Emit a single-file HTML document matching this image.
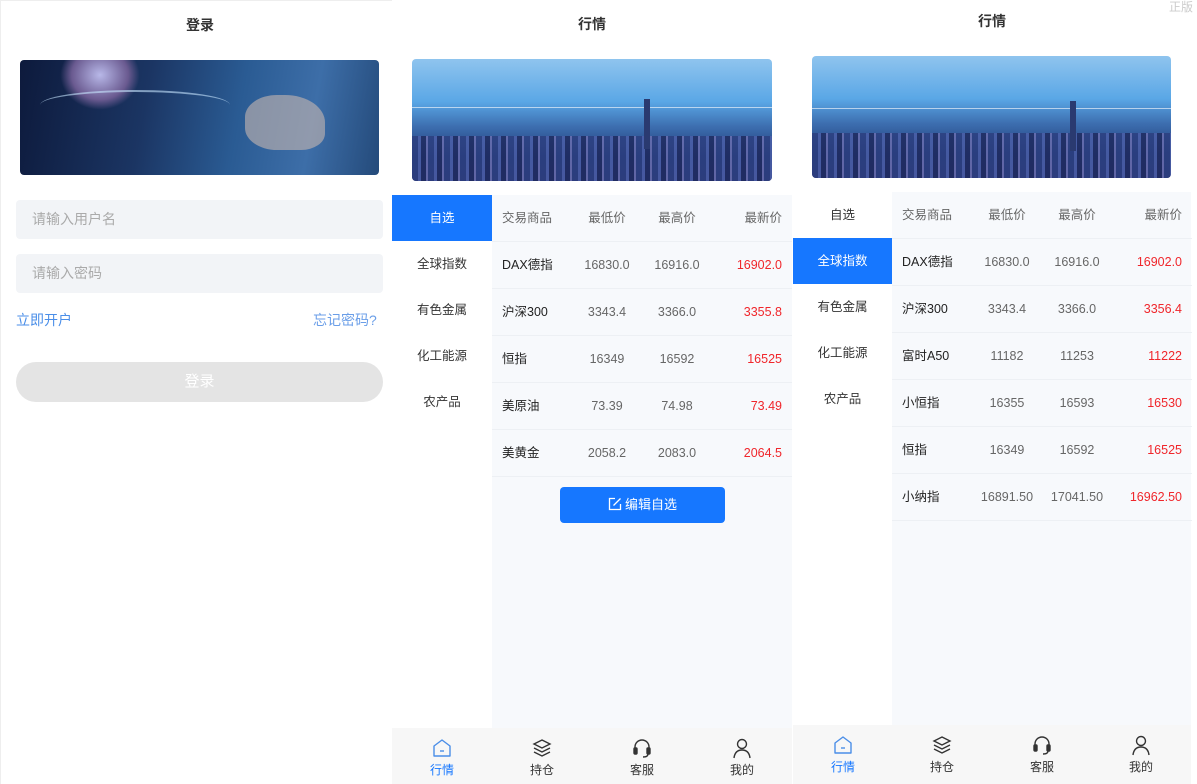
<!DOCTYPE html>
<html><head><meta charset="utf-8"><style>
*{margin:0;padding:0;box-sizing:border-box}
body{width:1197px;height:784px;position:relative;background:#fff;font-family:"Liberation Sans","Noto Sans CJK SC",sans-serif;overflow:hidden;color:#333}
.a{position:absolute}
.title{font-size:14px;font-weight:bold;color:#333;text-align:center}
.ban2{background:linear-gradient(180deg,#8fc4ee 0%,#5aa7e6 35%,#3d6fb0 55%,#1f3a78 80%,#2a2f6a 100%);border-radius:4px;overflow:hidden}
.ban1{background:linear-gradient(100deg,#0d1a3c 0%,#1b3563 35%,#2a5b93 60%,#3d6ea8 80%,#244a7a 100%);border-radius:4px;overflow:hidden}
.menu div{height:46px;line-height:46px;text-align:center;font-size:12.5px;color:#333}
.menu .on{background:#1677ff;color:#fff}
.tbl{background:#f7f9fc}
.row{position:absolute;left:0;width:300px;height:47px;border-bottom:1px solid #edf0f4;font-size:12.5px}
.row span{position:absolute;top:0;line-height:46px}
.c1{left:10px;color:#222}.c2{left:85px;width:60px;text-align:center;color:#666}.c3{left:155px;width:60px;text-align:center;color:#666}.c4{right:10px;color:#f0262b}
.hd span{color:#666}.hd .c4{color:#666}
.nav{background:#f7f7f7}
.nav div{position:absolute;top:0;width:100px;text-align:center;font-size:12px;color:#333;line-height:16px}
.nav svg{display:block;margin:9px auto 3px}
.city{position:absolute;left:0;bottom:0;width:100%;height:45px;background:repeating-linear-gradient(90deg,#2c3f80 0 6px,#4b5fa8 6px 9px,#1f2b60 9px 14px,#6a6fb0 14px 16px);opacity:.85}
</style></head><body>
<div class="a" style="right:4px;top:-2px;font-size:12px;color:#ccc">正版</div>
<div class="a" style="left:0;top:0;width:1px;height:784px;background:#eee"></div>
<div class="a" style="left:0;top:0;width:392px;height:1px;background:#eee"></div>
<!-- panel1 -->
<div class="a title" style="left:0;top:15px;width:400px">登录</div>
<div class="a ban1" style="left:20px;top:60px;width:359px;height:115px">
<div class="a" style="left:40px;top:-20px;width:80px;height:70px;border-radius:50%;background:radial-gradient(#b8b8e8,#6a5a90 50%,transparent 70%)"></div>
<div class="a" style="left:225px;top:35px;width:80px;height:55px;border-radius:40% 50% 30% 40%;background:#c8b8b0;opacity:.6"></div>
<div class="a" style="left:20px;top:30px;width:190px;height:30px;border-top:2px solid rgba(200,230,255,.6);border-radius:50%"></div>
</div>
<div class="a" style="left:16px;top:200px;width:367px;height:39px;background:#f2f4f7;border-radius:4px;font-size:14px;color:#aaa;line-height:39px;padding-left:16px">请输入用户名</div>
<div class="a" style="left:16px;top:254px;width:367px;height:39px;background:#f2f4f7;border-radius:4px;font-size:14px;color:#aaa;line-height:39px;padding-left:16px">请输入密码</div>
<div class="a" style="left:16px;top:310px;font-size:14px;color:#4a8ee8">立即开户</div>
<div class="a" style="left:313px;top:310px;font-size:14px;color:#6a9ee8">忘记密码?</div>
<div class="a" style="left:16px;top:362px;width:367px;height:40px;background:#e4e4e4;border-radius:20px;color:#fff;font-size:15px;text-align:center;line-height:40px">登录</div>

<!-- panel2 -->
<div class="a title" style="left:392px;top:14px;width:400px">行情</div>
<div class="a ban2" style="left:412px;top:59px;width:360px;height:122px">
<div class="city"></div>
<div class="a" style="left:0;top:48px;width:360px;height:1px;background:rgba(255,255,255,.6)"></div>
<div class="a" style="left:232px;top:40px;width:6px;height:50px;background:#2a3a70"></div>
</div>
<div class="a menu" style="left:392px;top:195px;width:100px">
<div class="on">自选</div><div>全球指数</div><div>有色金属</div><div>化工能源</div><div>农产品</div></div>
<div class="a tbl" style="left:492px;top:195px;width:300px;height:533px">
<div class="row hd" style="top:0"><span class="c1" style="color:#666">交易商品</span><span class="c2">最低价</span><span class="c3">最高价</span><span class="c4">最新价</span></div>
<div class="row" style="top:47px"><span class="c1">DAX德指</span><span class="c2">16830.0</span><span class="c3">16916.0</span><span class="c4">16902.0</span></div>
<div class="row" style="top:94px"><span class="c1">沪深300</span><span class="c2">3343.4</span><span class="c3">3366.0</span><span class="c4">3355.8</span></div>
<div class="row" style="top:141px"><span class="c1">恒指</span><span class="c2">16349</span><span class="c3">16592</span><span class="c4">16525</span></div>
<div class="row" style="top:188px"><span class="c1">美原油</span><span class="c2">73.39</span><span class="c3">74.98</span><span class="c4">73.49</span></div>
<div class="row" style="top:235px"><span class="c1">美黄金</span><span class="c2">2058.2</span><span class="c3">2083.0</span><span class="c4">2064.5</span></div>
<div class="a" style="left:68px;top:292px;width:165px;height:36px;background:#1677ff;border-radius:4px;color:#fff;font-size:13px;text-align:center;line-height:36px">
<svg width="14" height="14" viewBox="0 0 14 14" style="vertical-align:-2px;margin-right:3px"><path d="M7 1.5H1.5v11h11V7M5.5 8.5l7-7" fill="none" stroke="#fff" stroke-width="1.3"/></svg>编辑自选</div>
</div>
<div class="a nav" style="left:392px;top:728px;width:400px;height:56px">
<div style="left:0;color:#1677ff"><svg width="22" height="22" viewBox="0 0 22 22"><path d="M3 9L11 3l8 6v10H3z" fill="none" stroke="#4a8ee8" stroke-width="1.4" stroke-linejoin="round"/><path d="M9 14h4" stroke="#4a8ee8" stroke-width="1.4"/></svg>行情</div>
<div style="left:100px"><svg width="22" height="22" viewBox="0 0 22 22" fill="none" stroke="#333" stroke-width="1.4"><path d="M11 3l8 4-8 4-8-4z"/><path d="M3 11l8 4 8-4M3 15l8 4 8-4"/></svg>持仓</div>
<div style="left:200px"><svg width="22" height="22" viewBox="0 0 22 22" fill="none" stroke="#333" stroke-width="1.4"><path d="M4 12V10a7 7 0 0114 0v2"/><rect x="3" y="11" width="3" height="6" rx="1" fill="#333"/><rect x="16" y="11" width="3" height="6" rx="1" fill="#333"/><path d="M17 17q0 3-5 3"/></svg>客服</div>
<div style="left:300px"><svg width="22" height="22" viewBox="0 0 22 22" fill="none" stroke="#333" stroke-width="1.4"><circle cx="11" cy="7" r="4.5"/><path d="M3 21q1-8 8-8t8 8"/></svg>我的</div>
</div>

<!-- panel3 -->
<div class="a title" style="left:793px;top:11px;width:398px">行情</div>
<div class="a ban2" style="left:812px;top:56px;width:359px;height:122px">
<div class="city"></div>
<div class="a" style="left:0;top:52px;width:359px;height:1px;background:rgba(255,255,255,.6)"></div>
<div class="a" style="left:258px;top:45px;width:6px;height:50px;background:#2a3a70"></div>
</div>
<div class="a menu" style="left:793px;top:192px;width:99px">
<div>自选</div><div class="on">全球指数</div><div>有色金属</div><div>化工能源</div><div>农产品</div></div>
<div class="a tbl" style="left:892px;top:192px;width:299px;height:533px">
<div class="row hd" style="top:0"><span class="c1" style="color:#666">交易商品</span><span class="c2">最低价</span><span class="c3">最高价</span><span class="c4">最新价</span></div>
<div class="row" style="top:47px"><span class="c1">DAX德指</span><span class="c2">16830.0</span><span class="c3">16916.0</span><span class="c4">16902.0</span></div>
<div class="row" style="top:94px"><span class="c1">沪深300</span><span class="c2">3343.4</span><span class="c3">3366.0</span><span class="c4">3356.4</span></div>
<div class="row" style="top:141px"><span class="c1">富时A50</span><span class="c2">11182</span><span class="c3">11253</span><span class="c4">11222</span></div>
<div class="row" style="top:188px"><span class="c1">小恒指</span><span class="c2">16355</span><span class="c3">16593</span><span class="c4">16530</span></div>
<div class="row" style="top:235px"><span class="c1">恒指</span><span class="c2">16349</span><span class="c3">16592</span><span class="c4">16525</span></div>
<div class="row" style="top:282px"><span class="c1">小纳指</span><span class="c2">16891.50</span><span class="c3">17041.50</span><span class="c4">16962.50</span></div>
</div>
<div class="a nav" style="left:793px;top:725px;width:398px;height:59px">
<div style="left:0;color:#1677ff"><svg width="22" height="22" viewBox="0 0 22 22"><path d="M3 9L11 3l8 6v10H3z" fill="none" stroke="#4a8ee8" stroke-width="1.4" stroke-linejoin="round"/><path d="M9 14h4" stroke="#4a8ee8" stroke-width="1.4"/></svg>行情</div>
<div style="left:99px"><svg width="22" height="22" viewBox="0 0 22 22" fill="none" stroke="#333" stroke-width="1.4"><path d="M11 3l8 4-8 4-8-4z"/><path d="M3 11l8 4 8-4M3 15l8 4 8-4"/></svg>持仓</div>
<div style="left:199px"><svg width="22" height="22" viewBox="0 0 22 22" fill="none" stroke="#333" stroke-width="1.4"><path d="M4 12V10a7 7 0 0114 0v2"/><rect x="3" y="11" width="3" height="6" rx="1" fill="#333"/><rect x="16" y="11" width="3" height="6" rx="1" fill="#333"/><path d="M17 17q0 3-5 3"/></svg>客服</div>
<div style="left:298px"><svg width="22" height="22" viewBox="0 0 22 22" fill="none" stroke="#333" stroke-width="1.4"><circle cx="11" cy="7" r="4.5"/><path d="M3 21q1-8 8-8t8 8"/></svg>我的</div>
</div>
</body></html>
